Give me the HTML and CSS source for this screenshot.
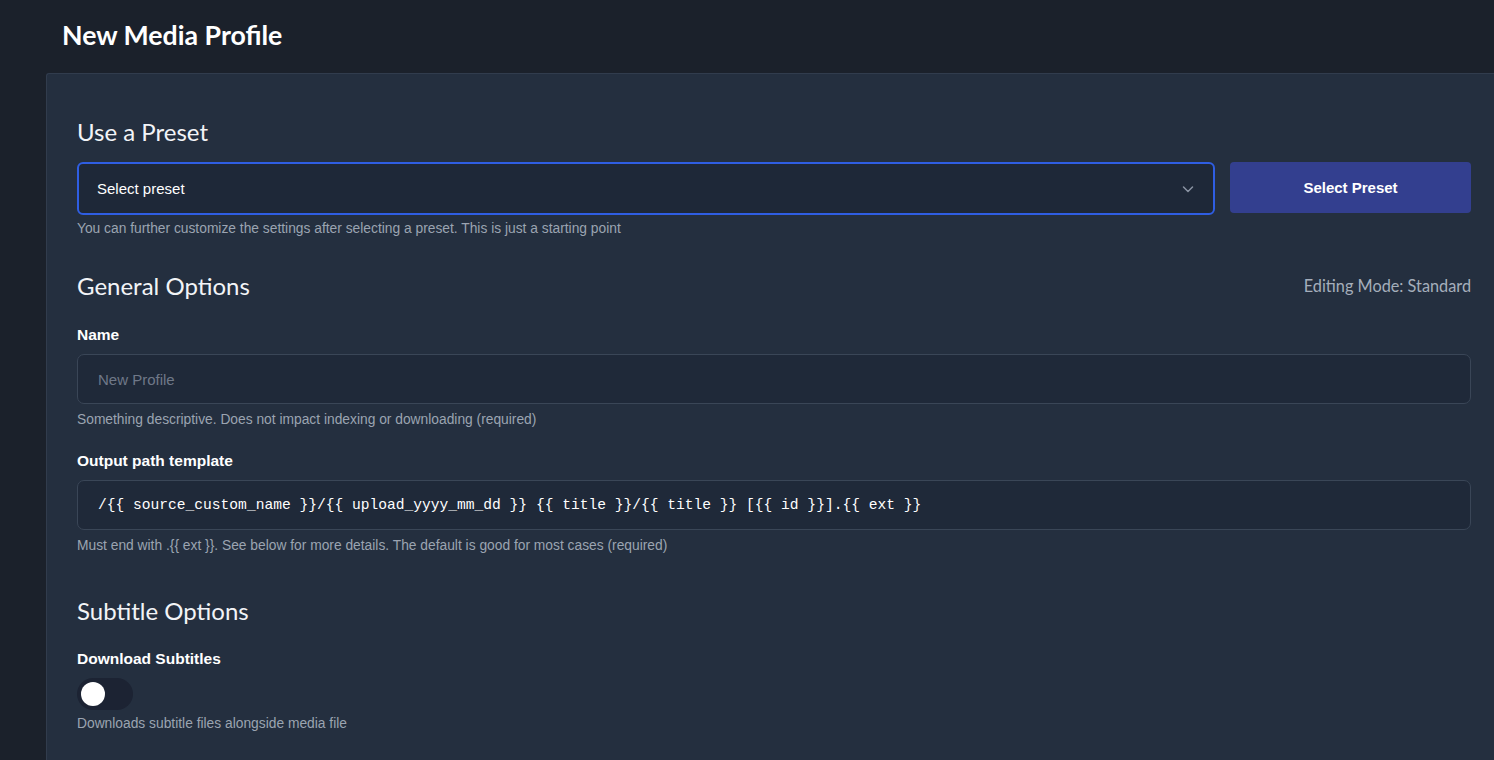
FILE: index.html
```html
<!DOCTYPE html>
<html lang="en">

<head>
 <meta charset="UTF-8">
 <meta name="viewport" content="width=device-width, initial-scale=1.0">
 <title>New Media Profile</title>
 <link rel="stylesheet" href="styles.css">
</head>

<body>
 <header class="top">
  <h1 class="page-title">New Media Profile</h1>
 </header>

 <main class="panel">
  <!-- Preset -->
  <section class="section">
   <h2 class="section-title preset-title">Use a Preset</h2>
   <div class="preset-row">
    <div class="select">
     <span>Select preset</span>
     <svg class="chevron" width="14" height="14" viewBox="0 0 14 14" fill="none">
      <path d="M2.5 5l4.5 4.5L11.5 5" stroke="#8a93a3" stroke-width="1.5" stroke-linecap="round" stroke-linejoin="round" />
     </svg>
    </div>
    <button class="btn">Select Preset</button>
   </div>
   <p class="hint">You can further customize the settings after selecting a preset. This is just a starting point</p>
  </section>

  <!-- General -->
  <section class="section section-wide">
   <div class="section-head">
    <h2 class="section-title">General Options</h2>
    <span class="mode">Editing Mode: Standard</span>
   </div>

   <div class="field">
    <label class="label">Name</label>
    <div class="input placeholder">New Profile</div>
    <p class="hint">Something descriptive. Does not impact indexing or downloading (required)</p>
   </div>

   <div class="field">
    <label class="label">Output path template</label>
    <div class="input mono">/{{ source_custom_name }}/{{ upload_yyyy_mm_dd }} {{ title }}/{{ title }} [{{ id }}].{{ ext }}</div>
    <p class="hint">Must end with .{{ ext }}. See below for more details. The default is good for most cases (required)</p>
   </div>
  </section>

  <!-- Subtitles -->
  <section class="section">
   <h2 class="section-title">Subtitle Options</h2>
   <div class="field">
    <label class="label">Download Subtitles</label>
    <div class="toggle"><span class="knob"></span></div>
    <p class="hint">Downloads subtitle files alongside media file</p>
   </div>
  </section>
 </main>
</body>

</html>
```

FILE: styles.css
```css
body {
 margin: 0;
 background-color: #1b212b;
 font-family: "Liberation Sans", Arial, sans-serif;
 color: #e6e9ee;
 overflow: hidden;
}

.top {
 height: 73px;
 padding-left: 62px;
 display: flex;
 align-items: center;
}

.page-title {
 margin: 0;
 font-family: Lato, sans-serif;
 font-size: 26.7px;
 font-weight: 700;
 color: #ffffff;
 position: relative;
 top: -2px;
}

.panel {
 margin-left: 46px;
 min-height: 700px;
 background-color: #242f3f;
 border-top: 1px solid #313c4d;
 border-left: 1px solid #313c4d;
 border-top-left-radius: 3px;
 padding: 43px 23px 0 30px;
}

.section {
 margin-bottom: 35px;
}

.section-wide {
 margin-bottom: 43px;
}

.section-title {
 margin: 0 0 24px;
 font-family: Lato, sans-serif;
 font-size: 24px;
 font-weight: 400;
 color: #f2f4f7;
 line-height: 30px;
}

.preset-title {
 margin-bottom: 15px;
}

.section-head {
 display: flex;
 justify-content: space-between;
 align-items: flex-start;
 padding-bottom: 1px;
}

.mode {
 font-family: Lato, sans-serif;
 font-size: 16.3px;
 line-height: 30px;
 color: #a5aebb;
}

.preset-row {
 display: flex;
 gap: 15px;
}

.select {
 flex: 1;
 box-sizing: border-box;
 height: 53px;
 padding: 0 20px 0 18px;
 border: 2px solid #2f5ee3;
 border-radius: 6px;
 background-color: #1e2838;
 display: flex;
 align-items: center;
 justify-content: space-between;
 font-size: 15px;
 color: #ffffff;
}

.chevron {
 margin-right: -2px;
}

.btn {
 width: 241px;
 height: 51px;
 border: none;
 border-radius: 4px;
 background-color: #333f8f;
 color: #ffffff;
 font-family: "Liberation Sans", Arial, sans-serif;
 font-size: 15px;
 font-weight: 700;
}

.hint {
 margin: 6px 0 0;
 font-size: 13.8px;
 color: #9ba4b1;
}

.field {
 margin-bottom: 25px;
}

.field:last-child {
 margin-bottom: 0;
}

.label {
 display: block;
 margin-bottom: 10px;
 font-size: 15.5px;
 font-weight: 700;
 color: #ffffff;
}

.input {
 height: 50px;
 box-sizing: border-box;
 padding: 0 20px;
 border: 1px solid #3a4657;
 border-radius: 7px;
 background-color: #1f2939;
 display: flex;
 align-items: center;
 font-size: 15px;
}

.input+.hint {
 margin-top: 8px;
}

.placeholder {
 color: #6f7888;
}

.mono {
 font-family: "Liberation Mono", "DejaVu Sans Mono", monospace;
 font-size: 14.6px;
 color: #ffffff;
}

.toggle {
 width: 56px;
 height: 32px;
 border-radius: 16px;
 background-color: #1c2333;
 display: flex;
 align-items: center;
 padding-left: 4px;
 box-sizing: border-box;
}

.knob {
 width: 24px;
 height: 24px;
 border-radius: 50%;
 background-color: #ffffff;
}
```
